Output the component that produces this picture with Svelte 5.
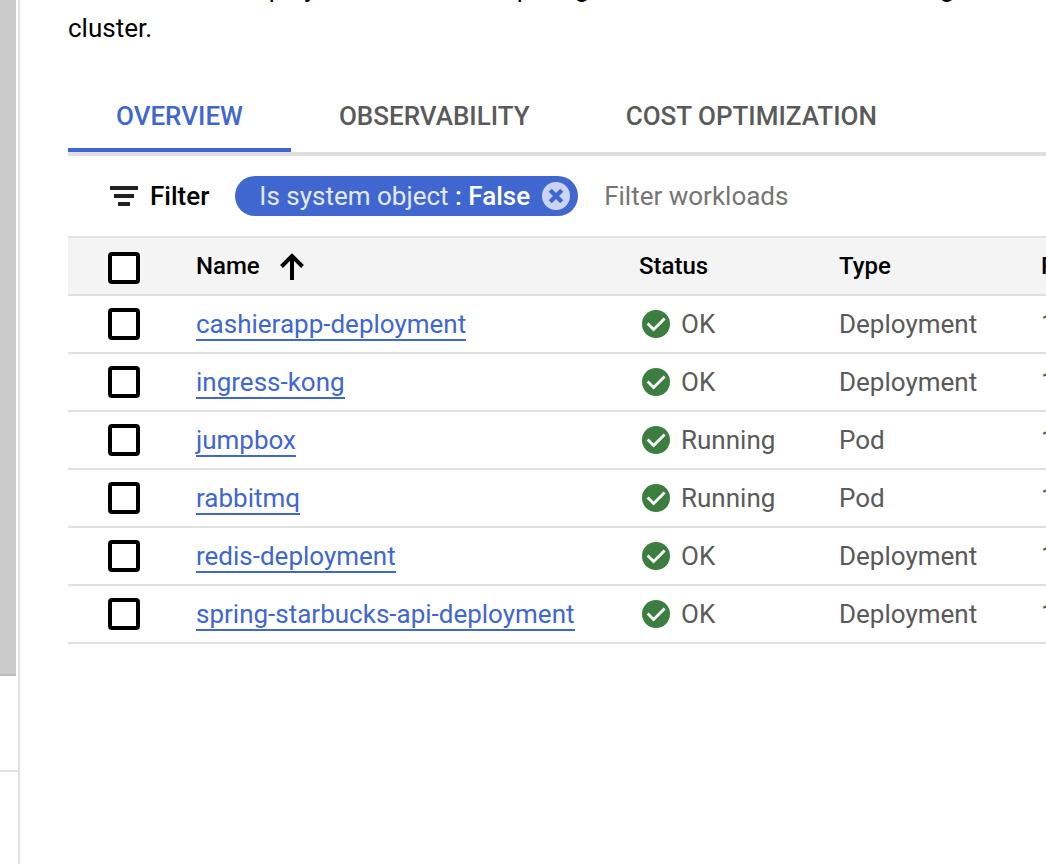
<script>
  const tabs = ['OVERVIEW', 'OBSERVABILITY', 'COST OPTIMIZATION'];
  const workloads = [
    { name: 'cashierapp-deployment', status: 'OK', type: 'Deployment', pods: '1/1' },
    { name: 'ingress-kong', status: 'OK', type: 'Deployment', pods: '1/1' },
    { name: 'jumpbox', status: 'Running', type: 'Pod', pods: '1/1' },
    { name: 'rabbitmq', status: 'Running', type: 'Pod', pods: '1/1' },
    { name: 'redis-deployment', status: 'OK', type: 'Deployment', pods: '1/1' },
    { name: 'spring-starbucks-api-deployment', status: 'OK', type: 'Deployment', pods: '1/1' }
  ];
  let active = $state('OVERVIEW');
</script>

<div class="page">
  <aside class="rail">
    <div class="track"><div class="thumb"></div></div>
    <div class="rail-foot"></div>
  </aside>

  <main>
    <p class="intro">
      Workloads are deployable units of computing that can be created and managed in a<br />cluster.
    </p>

    <nav class="tabs">
      {#each tabs as tab}
        <button class="tab" class:active={tab === active} onclick={() => (active = tab)}>{tab}</button>
      {/each}
    </nav>

    <div class="toolbar">
      <label class="filter-label" for="filter">
        <svg width="28" height="20" viewBox="0 0 28 20" aria-hidden="true">
          <path d="M0 0h28v4H0zM4 8h20v4H4zM8 16h12v4H8z" fill="#212121" />
        </svg>
        Filter
      </label>
      <div class="chip">
        <span><span class="key">Is system object</span> <b>: False</b></span>
        <button class="clear" aria-label="Remove filter">
          <svg width="28" height="28" viewBox="0 0 28 28" aria-hidden="true">
            <circle cx="14" cy="14" r="14" fill="#cbd5f3" />
            <path d="M8.200 8.200l11.600 11.600M19.800 8.200L8.200 19.800" stroke="#4067d0" stroke-width="4.400" />
          </svg>
        </button>
      </div>
      <input id="filter" class="filter-input" type="text" placeholder="Filter workloads" />
    </div>

    <table>
      <colgroup>
        <col class="c-check" />
        <col />
        <col class="c-status" />
        <col class="c-type" />
        <col class="c-pods" />
      </colgroup>
      <thead>
        <tr>
          <th class="check"><input type="checkbox" aria-label="Select all workloads" /></th>
          <th>
            <span class="sort">
              Name
              <svg width="24" height="28" viewBox="0 0 24 28" aria-hidden="true">
                <path d="M12 28V4M1.500 14.500L12 4l10.500 10.500" fill="none" stroke="#000" stroke-width="4" />
              </svg>
            </span>
          </th>
          <th>Status</th>
          <th>Type</th>
          <th>Pods</th>
        </tr>
      </thead>
      <tbody>
        {#each workloads as w}
          <tr>
            <td class="check"><input type="checkbox" aria-label={`Select ${w.name}`} /></td>
            <td><a href={`#${w.name}`}>{w.name}</a></td>
            <td>
              <span class="status">
                <svg width="28" height="28" viewBox="0 0 28 28" aria-hidden="true">
                  <circle cx="14" cy="14" r="14" fill="#3c7e3f" />
                  <path d="M5.600 13.600l6 6L22.600 8.400" fill="none" stroke="#fff" stroke-width="2.800" />
                </svg>
                {w.status}
              </span>
            </td>
            <td>{w.type}</td>
            <td>{w.pods}</td>
          </tr>
        {/each}
      </tbody>
    </table>
  </main>
</div>

<style>
  :global(body) {
    background: #fff;
    font-family: Roboto, sans-serif;
    font-size: 26px;
    color: #000;
  }
  .page {
    display: flex;
    min-height: 100vh;
    overflow: hidden;
  }
  .rail {
    display: flex;
    flex-direction: column;
    flex: none;
    width: 18px;
    border-right: 2px solid #e0e0e0;
  }
  .track {
    flex: 1;
    display: flex;
    flex-direction: column;
    border-bottom: 2px solid #e0e0e0;
  }
  .thumb {
    flex: 0 0 87.5%;
    width: 16px;
    background: #cbcbcb;
    border-bottom: 2px solid #bdbdbd;
  }
  .rail-foot {
    height: 92px;
  }
  main {
    flex: 1;
    min-width: 0;
    padding-left: 48px;
  }
  .intro {
    margin: -32px 0 0;
    line-height: 40px;
    white-space: nowrap;
  }
  .tabs {
    display: flex;
    margin-top: 32px;
    border-bottom: 4px solid #e0e0e0;
  }
  .tab {
    padding: 16px 48px 12px;
    border: 0;
    border-bottom: 4px solid transparent;
    background: none;
    font: 500 26px/40px Roboto, sans-serif;
    color: #5a5a5a;
    white-space: nowrap;
    cursor: pointer;
  }
  .tab.active {
    color: #4067d0;
    border-bottom-color: #4067d0;
  }
  .toolbar {
    display: flex;
    align-items: center;
    height: 80px;
    padding-left: 42px;
  }
  .filter-label {
    display: flex;
    align-items: center;
    gap: 12px;
    font-weight: 500;
  }
  .chip {
    display: flex;
    align-items: center;
    gap: 12px;
    height: 40px;
    margin-left: 26px;
    padding: 0 8px 0 24px;
    border-radius: 20px;
    background: #4067d0;
    color: #fff;
    white-space: nowrap;
  }
  .key {
    color: #e3e9f9;
  }
  .chip b {
    font-weight: 500;
  }
  .clear {
    display: flex;
    padding: 0;
    border: 0;
    background: none;
    cursor: pointer;
  }
  .filter-input {
    flex: 1;
    min-width: 0;
    margin-left: 26px;
    padding: 0;
    border: 0;
    outline: 0;
    background: none;
    font: 26px/40px Roboto, sans-serif;
  }
  .filter-input::placeholder {
    color: #757575;
  }
  table {
    width: calc(100% + 175px);
    table-layout: fixed;
    border-collapse: separate;
    border-spacing: 0;
    border-top: 2px solid #e0e0e0;
  }
  .c-check {
    width: 108px;
  }
  .c-status {
    width: 200px;
  }
  .c-type {
    width: 202px;
  }
  .c-pods {
    width: 200px;
  }
  th,
  td {
    height: 56px;
    padding: 0 20px;
    border-bottom: 2px solid #e0e0e0;
    text-align: left;
    white-space: nowrap;
  }
  th {
    background: #f4f4f4;
    font-size: 24px;
    font-weight: 500;
  }
  td {
    color: #5a5a5a;
  }
  .check {
    padding-left: 40px;
  }
  .check input {
    display: block;
    appearance: none;
    width: 32px;
    height: 32px;
    margin: 0;
    border: 4px solid #000;
    border-radius: 4px;
    background: #fff;
  }
  th.check input {
    margin-top: 4px;
  }
  .check input:checked {
    background: #4067d0;
  }
  .sort {
    display: flex;
    align-items: center;
    gap: 20px;
  }
  .status {
    display: flex;
    align-items: center;
    gap: 11px;
    padding-left: 3px;
  }
  a {
    display: inline-block;
    line-height: 30px;
    border-bottom: 2px solid #4067d0;
    color: #4067d0;
    text-decoration: none;
    vertical-align: middle;
  }
</style>
